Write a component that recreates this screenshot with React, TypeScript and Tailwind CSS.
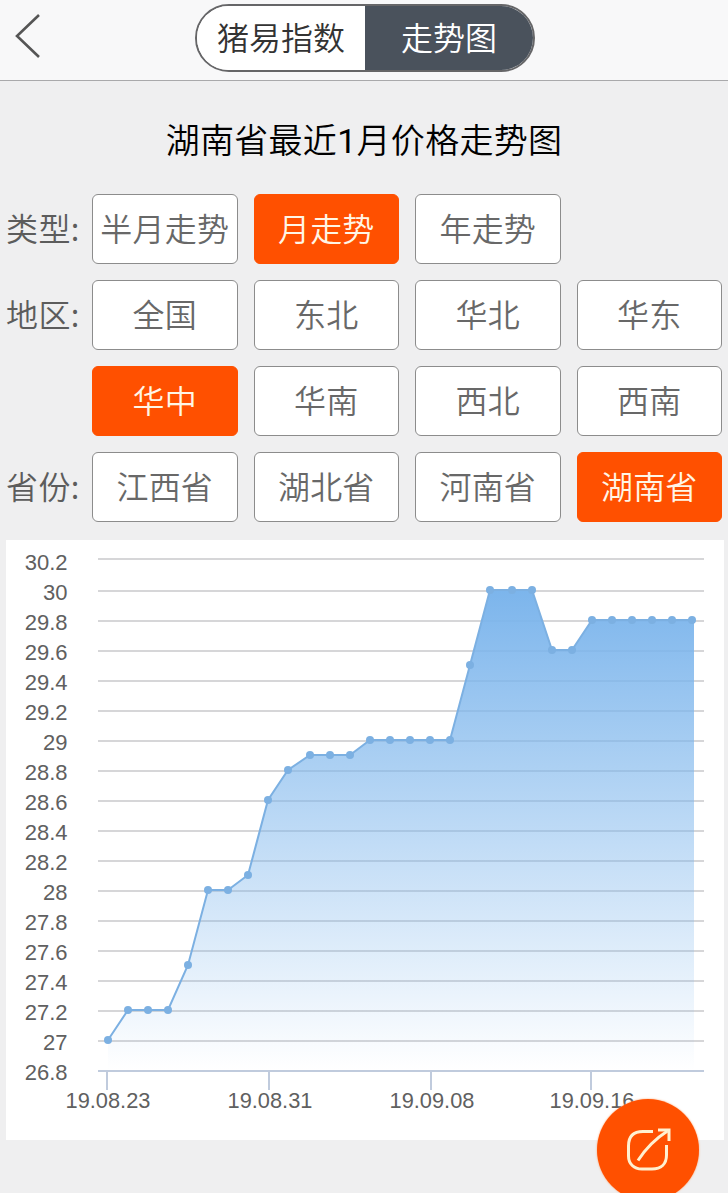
import { useState } from 'react';

const typeOptions = ['半月走势', '月走势', '年走势'];
const regionOptions = ['全国', '东北', '华北', '华东', '华中', '华南', '西北', '西南'];
const provinceOptions = ['江西省', '湖北省', '河南省', '湖南省'];

// x is the pixel column of each day on the axis
const prices = [
    { x: 102, price: 27 },
    { x: 122, price: 27.2 },
    { x: 142, price: 27.2 },
    { x: 162, price: 27.2 },
    { x: 182, price: 27.5 },
    { x: 202, price: 28 },
    { x: 222, price: 28 },
    { x: 242, price: 28.1 },
    { x: 262, price: 28.6 },
    { x: 282, price: 28.8 },
    { x: 304, price: 28.9 },
    { x: 324, price: 28.9 },
    { x: 344, price: 28.9 },
    { x: 364, price: 29 },
    { x: 384, price: 29 },
    { x: 404, price: 29 },
    { x: 424, price: 29 },
    { x: 444, price: 29 },
    { x: 464, price: 29.5 },
    { x: 484, price: 30 },
    { x: 506, price: 30 },
    { x: 526, price: 30 },
    { x: 546, price: 29.6 },
    { x: 566, price: 29.6 },
    { x: 586, price: 29.8 },
    { x: 606, price: 29.8 },
    { x: 626, price: 29.8 },
    { x: 646, price: 29.8 },
    { x: 666, price: 29.8 },
    { x: 686, price: 29.8 },
];

const yTicks = Array.from({ length: 18 }, (_, i) => Math.round((26.8 + i * 0.2) * 10) / 10);

const xTicks = [
    { x: 101, label: '19.08.23' },
    { x: 263, label: '19.08.31' },
    { x: 425, label: '19.09.08' },
    { x: 585, label: '19.09.16' },
];

interface FilterRowProps {
    label: string;
    options: string[];
    value: string;
    onChange: (value: string) => void;
}

function FilterRow({ label, options, value, onChange }: FilterRowProps) {
    return (
        <div className="flex">
            <div className="h-[70px] w-[86px] shrink-0 text-[32px] leading-[67px] tracking-[0.4px] whitespace-nowrap text-[#5c5c5c]">
                {label}:
            </div>
            <div className="grid flex-1 grid-cols-4 gap-4">
                {options.map((option) => (
                    <button
                        key={option}
                        onClick={() => onChange(option)}
                        className={`h-[70px] rounded-md border pb-1 text-[32px] leading-[64px] tracking-[0.2px] whitespace-nowrap ${
                            option === value
                                ? 'border-[#ff5000] bg-[#ff5000] text-[#fff6e6]'
                                : 'border-[#8c8c8c] bg-white text-[#686868]'
                        }`}
                    >
                        {option}
                    </button>
                ))}
            </div>
        </div>
    );
}

function PriceChart() {
    const points = prices.map(({ x, price }) => ({ x, y: 500 - (price - 27) * 150 }));
    const line = points.map((p) => `${p.x},${p.y}`).join(' ');

    return (
        <svg width="718" height="600" viewBox="0 0 718 600" className="block font-['Liberation_Sans',Arial,sans-serif] font-normal">
            <defs>
                <linearGradient id="area" gradientUnits="userSpaceOnUse" x1="0" y1="50" x2="0" y2="530">
                    <stop offset="0" stopColor="#7cb5ec" />
                    <stop offset="1" stopColor="#7cb5ec" stopOpacity="0" />
                </linearGradient>
            </defs>

            {yTicks.map((tick, i) => {
                const y = i === 17 ? 19 : 531 - i * 30;
                return (
                    <g key={tick}>
                        {i > 0 && <line x1="92" x2="698" y1={y} y2={y} stroke="#d6d6d8" strokeWidth="2" />}
                        <text x="61.5" y={540 - i * 30} textAnchor="end" fontSize="22" fill="#606060">
                            {tick}
                        </text>
                    </g>
                );
            })}

            <polygon points={`102,530 ${line} 688,80 688,530`} fill="url(#area)" />
            <polyline points={line} fill="none" stroke="#7cb0e2" strokeWidth="2" />
            {points.map((p) => (
                <circle key={p.x} cx={p.x} cy={p.y} r="4" fill="#7cb0e2" />
            ))}

            <line x1="92" x2="698" y1="531" y2="531" stroke="#c0cbdd" strokeWidth="2" />
            {xTicks.map((tick) => (
                <g key={tick.label}>
                    <line x1={tick.x} x2={tick.x} y1="532" y2="550" stroke="#c0cbdd" strokeWidth="2" />
                    <text x={tick.x + 1} y="568" textAnchor="middle" fontSize="21.8" fill="#606060">
                        {tick.label}
                    </text>
                </g>
            ))}
        </svg>
    );
}

export default function App() {
    const [type, setType] = useState('月走势');
    const [region, setRegion] = useState('华中');
    const [province, setProvince] = useState('湖南省');

    return (
        <div className="relative h-[1193px] w-[728px] overflow-hidden bg-[#efeff0] font-['Noto_Sans_CJK_SC',sans-serif] font-[350]">
            <header className="flex h-[81px] items-start border-b border-[#a9a9ab] bg-[#f8f8f9]">
                <button className="mt-3 ml-3 w-[183px]" aria-label="返回">
                    <svg width="32" height="48" viewBox="0 0 32 48" fill="none" stroke="#555" strokeWidth="2.6">
                        <path d="M27 3 5 24 27 45" />
                    </svg>
                </button>
                <div className="mt-1 flex h-[68px] w-[340px] overflow-hidden rounded-full border-2 border-[#666668] text-[32px] leading-[60px]">
                    <button className="h-16 w-[168px] bg-white pb-1 text-[#333]">猪易指数</button>
                    <button className="h-16 flex-1 bg-[#4a525c] pb-1 text-white">走势图</button>
                </div>
            </header>

            <h1 className="mt-[33px] h-20 text-center text-[34px] leading-[50px] tracking-[0.3px] text-black">
                湖南省最近<span className="font-['Roboto',sans-serif] font-normal">1</span>月价格走势图
            </h1>

            <section className="flex flex-col gap-4 px-1.5">
                <FilterRow label="类型" options={typeOptions} value={type} onChange={setType} />
                <FilterRow label="地区" options={regionOptions} value={region} onChange={setRegion} />
                <FilterRow label="省份" options={provinceOptions} value={province} onChange={setProvince} />
            </section>

            <section className="mt-[18px] ml-1.5 w-[718px] bg-white">
                <PriceChart />
            </section>

            <button
                className="absolute top-[1099px] left-[597px] flex h-[102px] w-[102px] items-center justify-center rounded-full bg-[#ff5000] shadow-[0_0_2px_#ff9a60]"
                aria-label="分享"
            >
                <svg width="48" height="48" viewBox="0 0 48 48" fill="none" stroke="#fff0d0" strokeWidth="3">
                    <path d="M29 5.500H19C9 5.500 4.500 11 4.500 20V30C4.500 38 10 43 18 43H28C37 43 42.500 38 42.500 29V19" />
                    <path d="M14 34.500C22 22 31 13 43.500 5" />
                    <path d="M34 4H45V15" />
                </svg>
            </button>
        </div>
    );
}
